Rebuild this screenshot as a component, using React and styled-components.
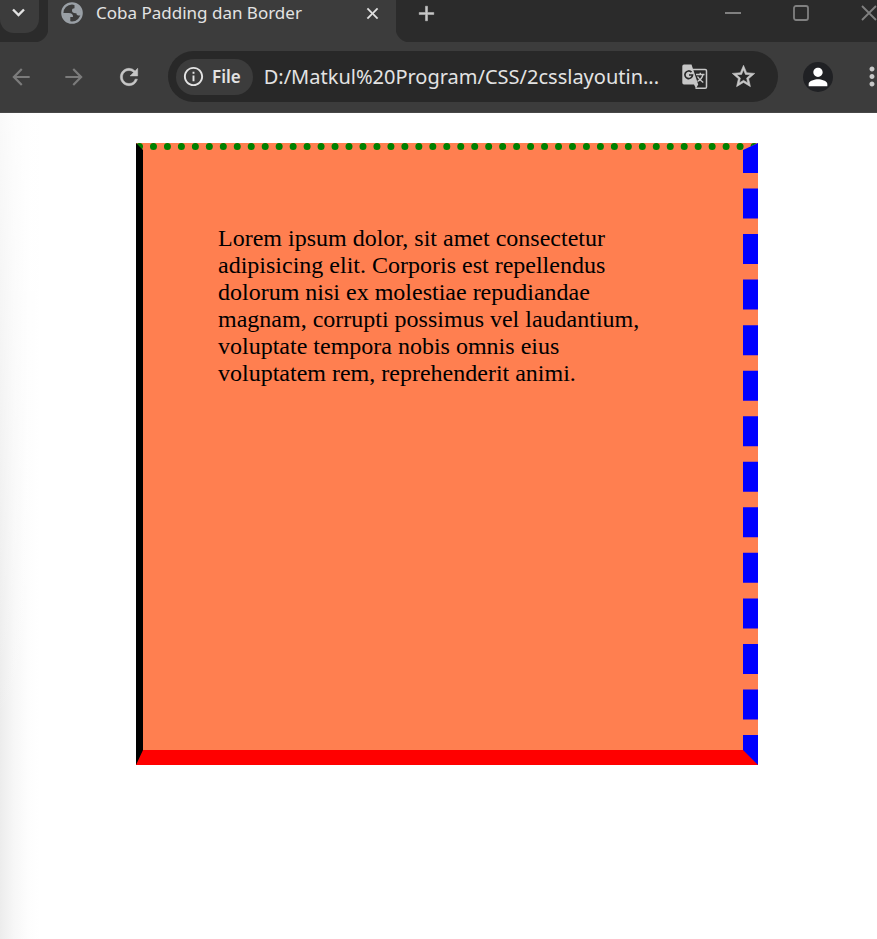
import React from "react";
import styled, { createGlobalStyle } from "styled-components";
import {
  MdArrowBack,
  MdArrowForward,
  MdRefresh,
  MdInfoOutline,
  MdStarOutline,
  MdMoreVert,
  MdPerson,
  MdClose,
  MdAdd,
} from "react-icons/md";

const GlobalStyle = createGlobalStyle`
  *, *::before, *::after { box-sizing: border-box; }
  html, body { margin: 0; background: #ffffff; }
  button, input { font: inherit; color: inherit; }
`;

const Browser = styled.div`
  min-height: 100vh;
  display: flex;
  flex-direction: column;
  overflow: hidden;
  color: #e3e3e3;
  font-family: "Segoe UI", "Noto Sans", "Open Sans", sans-serif;
`;

const TabStrip = styled.header`
  display: flex;
  height: 42px;
  background: #2b2b2b;
`;

const IconButton = styled.button`
  display: flex;
  flex: none;
  align-items: center;
  justify-content: center;
  width: ${(p) => p.$width}px;
  height: 26px;
  padding: 0;
  border: 0;
  background: none;
  color: ${(p) => p.$color || "#e3e3e3"};
`;

const BoldIconButton = styled(IconButton)`
  svg {
    stroke-width: 0.5;
  }
  path[fill="none"] {
    stroke: none;
  }
`;

const TabSearch = styled(IconButton)`
  height: 33px;
  padding: 0 3px 9px 0;
  background: #3c3c3c;
  border-radius: 0 0 14px 14px;
`;

const Tab = styled.div`
  position: relative;
  display: flex;
  align-items: center;
  width: 348px;
  height: 42px;
  margin-left: 9px;
  padding: 0 11px 16px 13px;
  background: #3c3c3c;

  &::before,
  &::after {
    content: "";
    position: absolute;
    bottom: 0;
    width: 14px;
    height: 14px;
  }
  &::before {
    right: 100%;
    background: radial-gradient(circle at 0 0, transparent 14px, #3c3c3c 15px);
  }
  &::after {
    left: 100%;
    background: radial-gradient(circle at 100% 0, transparent 14px, #3c3c3c 15px);
  }
`;

const TabTitle = styled.span`
  flex: 1;
  margin-left: 13px;
  font-size: 17px;
  line-height: 26px;
  white-space: nowrap;
`;

const NewTab = styled(BoldIconButton)`
  margin-left: 14px;
`;

const WindowControls = styled.div`
  display: flex;
  gap: 28px;
  margin-left: auto;
  margin-right: -12px;
`;

const Toolbar = styled.nav`
  display: flex;
  align-items: center;
  height: 71px;
  padding-top: 1px;
  padding-bottom: 2px;
  background: #3c3c3c;
  border-bottom: 1px solid #474747;
`;

const AddressBar = styled.div`
  display: flex;
  flex: 1;
  align-items: center;
  min-width: 0;
  height: 51px;
  margin-left: 16px;
  padding: 0 12px 0 8px;
  background: #282828;
  border-radius: 26px;
`;

const SiteChip = styled.button`
  display: flex;
  flex: none;
  align-items: center;
  gap: 7px;
  height: 36px;
  padding: 0 12px 0 6px;
  border: 0;
  border-radius: 18px;
  background: #3c3c3c;
  font-size: 17px;
  font-weight: 600;
`;

const Address = styled.input`
  flex: 1;
  min-width: 0;
  height: 36px;
  margin-left: 11px;
  padding: 0;
  border: 0;
  outline: 0;
  background: none;
  font-size: 20px;
`;

const Profile = styled.button`
  display: flex;
  flex: none;
  align-items: center;
  justify-content: center;
  width: 30px;
  height: 30px;
  margin-left: 25px;
  padding: 0;
  border: 0;
  border-radius: 50%;
  background: #202124;
  color: #ffffff;
`;

const Menu = styled(IconButton)`
  margin-left: 24px;
  margin-right: -10px;
`;

const Viewport = styled.main`
  display: flex;
  flex: 1;
  justify-content: center;
  align-items: flex-start;
  padding: 30px 0 30px 17px;
  background:
    linear-gradient(to bottom, rgba(255, 255, 255, 0.7), rgba(255, 255, 255, 0) 75%),
    linear-gradient(to right, #ececec, #f7f7f7 14px, #fdfdfd 28px, #ffffff 40px);
`;

const Box = styled.div`
  box-sizing: content-box;
  width: 450px;
  height: 450px;
  padding: 75px;
  background: coral;
  border-top: 7px dotted green;
  border-right: 15px dashed blue;
  border-bottom: 15px solid red;
  border-left: 7px solid black;
  color: #000000;
  font-family: "Times New Roman", "Liberation Serif", serif;
  font-size: 24px;
  line-height: 27px;
`;

const Globe = () => (
  <svg width="22" height="22" viewBox="0 0 22 22" aria-hidden="true">
    <circle cx="11" cy="11" r="9.7" fill="none" stroke="#9aa0a6" strokeWidth="2.200" />
    <path
      d="M2 11H7.500c3.200 0 4.700 1.400 4.500 4H9.300v5C5.200 19.500 1.800 15.500 2 11z"
      fill="#9aa0a6"
    />
    <path
      d="M13.500 1.800C17.300 3 20.200 7.100 20.200 11c0 .7-.1 1.300-.3 1.900-.6.600-1.600.8-2.500.6-1.300-.2-2-1-2-2.300-2.900.2-4.400-.7-4.400-2.700 0-1.500.9-2.300 2.500-2.300z"
      fill="#9aa0a6"
    />
  </svg>
);

const Translate = () => (
  <svg width="26" height="26" viewBox="0 0 26 26" aria-hidden="true">
    <path d="M11 5.500H23.200a1.300 1.300 0 0 1 1.300 1.300V23a1.300 1.300 0 0 1-1.300 1.300H13.500" fill="none" stroke="#c7c7c7" strokeWidth="1.500" />
    <path d="M14 10.500h8.500M18.300 8.800v1.700M21 10.500c-.7 3-3 5.500-5.500 7M15.500 12.500c1.200 2.300 3.500 4.500 5.800 6" fill="none" stroke="#c7c7c7" strokeWidth="1.400" />
    <path d="M2 .5h7.500l6.700 20-2.200 4-2-4H2a1.700 1.700 0 0 1-1.700-1.700V2.200A1.700 1.700 0 0 1 2 .5z" fill="#c7c7c7" />
    <path d="M9.500 8.200A3.800 3.800 0 1 0 10.500 11H7" fill="none" stroke="#282828" strokeWidth="1.700" />
  </svg>
);

const Minimize = () => (
  <svg width="16" height="16" viewBox="0 0 16 16" aria-hidden="true">
    <path d="M0 8h16" stroke="currentColor" strokeWidth="2" />
  </svg>
);

const Maximize = () => (
  <svg width="16" height="16" viewBox="0 0 16 16" aria-hidden="true">
    <rect x="1" y="1" width="14" height="14" rx="2" fill="none" stroke="currentColor" strokeWidth="1.800" />
  </svg>
);

const CloseWindow = () => (
  <svg width="16" height="16" viewBox="0 0 16 16" aria-hidden="true">
    <path d="M1 1l14 14M15 1L1 15" stroke="currentColor" strokeWidth="1.800" />
  </svg>
);

const Chevron = () => (
  <svg width="13" height="9" viewBox="0 0 13 9" aria-hidden="true">
    <path d="M1 1.500l5.500 5.500L12 1.500" fill="none" stroke="currentColor" strokeWidth="2.400" />
  </svg>
);

export default function App() {
  return (
    <>
      <GlobalStyle />
      <Browser>
        <TabStrip>
          <TabSearch $width={39} aria-label="Search tabs"><Chevron /></TabSearch>
          <Tab>
            <Globe />
            <TabTitle>Coba Padding dan Border</TabTitle>
            <BoldIconButton $width={26} aria-label="Close tab"><MdClose size={19} /></BoldIconButton>
          </Tab>
          <NewTab $width={32} $color="#c7c7c7" aria-label="New tab"><MdAdd size={25} /></NewTab>
          <WindowControls>
            <IconButton $width={40} $color="#808080" aria-label="Minimize"><Minimize /></IconButton>
            <IconButton $width={40} $color="#808080" aria-label="Maximize"><Maximize /></IconButton>
            <IconButton $width={40} $color="#808080" aria-label="Close window"><CloseWindow /></IconButton>
          </WindowControls>
        </TabStrip>
        <Toolbar>
          <IconButton $width={42} $color="#7b7b7b" aria-label="Back"><MdArrowBack size={26} /></IconButton>
          <IconButton $width={64} $color="#7b7b7b" aria-label="Forward"><MdArrowForward size={26} /></IconButton>
          <BoldIconButton $width={46} $color="#c7c7c7" aria-label="Reload"><MdRefresh size={26} /></BoldIconButton>
          <AddressBar>
            <SiteChip><MdInfoOutline size={23} />File</SiteChip>
            <Address aria-label="Address" readOnly value="D:/Matkul%20Program/CSS/2csslayoutin..." />
            <IconButton $width={50} aria-label="Translate page"><Translate /></IconButton>
            <BoldIconButton $width={46} $color="#c7c7c7" aria-label="Bookmark"><MdStarOutline size={27} /></BoldIconButton>
          </AddressBar>
          <Profile aria-label="Profile"><MdPerson size={28} /></Profile>
          <Menu $width={30} $color="#c7c7c7" aria-label="Menu"><MdMoreVert size={31} /></Menu>
        </Toolbar>
        <Viewport>
          <Box>
            Lorem ipsum dolor, sit amet consectetur adipisicing elit. Corporis est repellendus dolorum
            nisi ex molestiae repudiandae magnam, corrupti possimus vel laudantium, voluptate tempora
            nobis omnis eius voluptatem rem, reprehenderit animi.
          </Box>
        </Viewport>
      </Browser>
    </>
  );
}
